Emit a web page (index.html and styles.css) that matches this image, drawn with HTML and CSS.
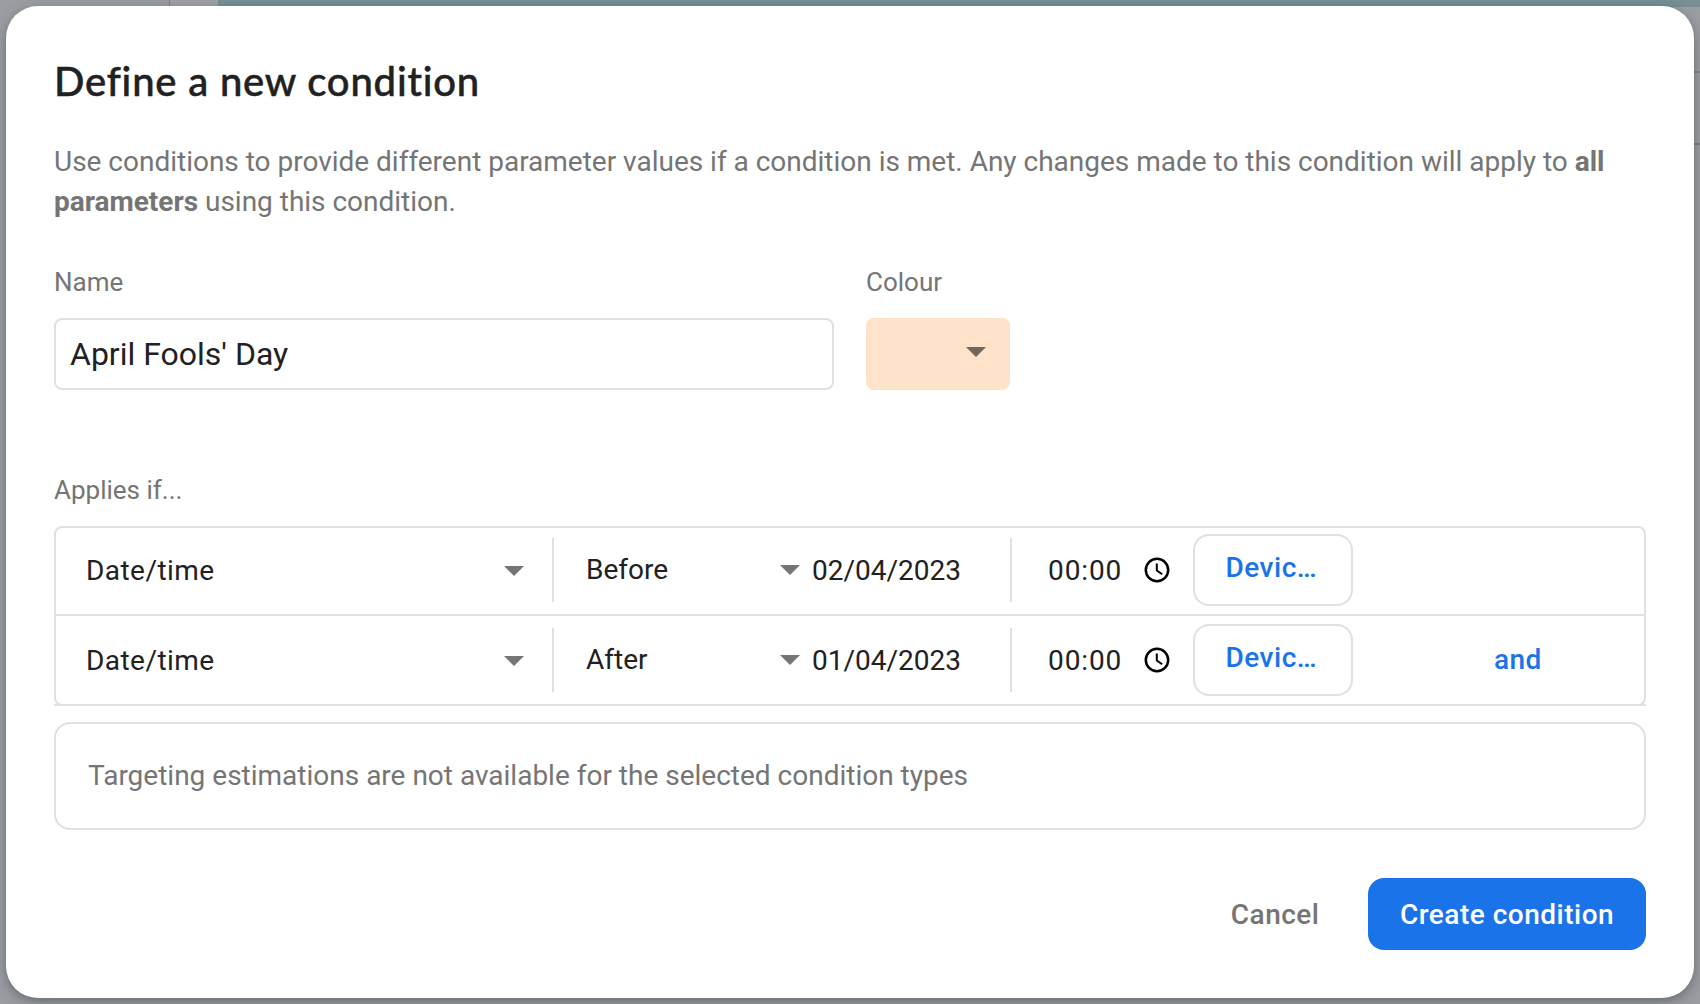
FILE: index.html
```html
<!DOCTYPE html>
<html lang="en-GB">
<head>
<meta charset="utf-8">
<title>Define a new condition</title>
<link rel="stylesheet" href="styles.css">
</head>
<body>
<div class="backdrop">
  <div class="backdrop-nav"></div>
  <div class="backdrop-gutter"></div>
  <div class="backdrop-banner"></div>
  <div class="backdrop-lines"></div>
</div>
<main class="dialog">
  <h1 class="title">Define a new condition</h1>
  <p class="intro">Use conditions to provide different parameter values if a condition is met. Any changes made to this condition will apply to <b>all parameters</b> using this condition.</p>
  <div class="fields">
    <div class="field">
      <div class="label">Name</div>
      <div class="name-input">April Fools' Day</div>
    </div>
    <div class="field">
      <div class="label">Colour</div>
      <div class="colour-select"><svg class="arrow" viewBox="0 0 20 10"><path d="M0 0h20L10 10z"/></svg></div>
    </div>
  </div>
  <div class="label applies">Applies if...</div>
  <div class="rules">
    <div class="rule">
      <div class="cell subject"><span>Date/time</span><svg class="arrow" viewBox="0 0 20 10"><path d="M0 0h20L10 10z"/></svg></div>
      <div class="cell operator"><span>Before</span><svg class="arrow" viewBox="0 0 20 10"><path d="M0 0h20L10 10z"/></svg></div>
      <div class="cell date">02/04/2023</div>
      <div class="cell time"><span>00:00</span><svg class="clock" viewBox="0 0 26 26"><circle cx="13" cy="13" r="11.2"/><path d="M12.8 6.5v7l5.4 3.8"/></svg></div>
      <div class="zone">Devic…</div>
    </div>
    <div class="rule">
      <div class="cell subject"><span>Date/time</span><svg class="arrow" viewBox="0 0 20 10"><path d="M0 0h20L10 10z"/></svg></div>
      <div class="cell operator"><span>After</span><svg class="arrow" viewBox="0 0 20 10"><path d="M0 0h20L10 10z"/></svg></div>
      <div class="cell date">01/04/2023</div>
      <div class="cell time"><span>00:00</span><svg class="clock" viewBox="0 0 26 26"><circle cx="13" cy="13" r="11.2"/><path d="M12.8 6.5v7l5.4 3.8"/></svg></div>
      <div class="zone">Devic…</div>
      <div class="and">and</div>
    </div>
  </div>
  <div class="note">Targeting estimations are not available for the selected condition types</div>
  <div class="actions">
    <div class="cancel">Cancel</div>
    <div class="create">Create condition</div>
  </div>
</main>
</body>
</html>
```

FILE: styles.css
```css
* { box-sizing: border-box; }
body {
  margin: 0;
  width: 1700px;
  height: 1004px;
  padding: 6px;
  overflow: hidden;
  background: #9a9ea3;
  font-family: Roboto, sans-serif;
  font-size: 28px;
  line-height: 40px;
  color: #212121;
}
.backdrop {
  position: absolute;
  inset: 0;
  display: grid;
  grid-template-columns: 170px 48px 1fr;
}
.backdrop-nav { height: 40px; border-right: 1px solid #7c7f83; }
.backdrop-gutter { height: 40px; background: #a0a1a7; }
.backdrop-banner { height: 7px; background: #769093; }
.backdrop-lines {
  position: absolute;
  right: 0;
  top: 71px;
  width: 12px;
  height: 74px;
  border-top: 2px solid #85898d;
  border-bottom: 2px solid #7c8084;
}
.dialog {
  position: relative;
  height: 992px;
  padding: 50px 48px 48px;
  border-radius: 32px;
  background: #fff;
  box-shadow: 0 3px 8px rgba(0, 0, 0, .22), 0 6px 20px rgba(0, 0, 0, .12);
}
.title {
  margin: 0;
  font: 500 40px/50px Lato, sans-serif;
  letter-spacing: .8px;
  -webkit-text-stroke: .5px #212121;
}
.intro { margin: 36px 0 0; color: #757575; letter-spacing: -.01px; }
.intro b { font-weight: 700; }
.fields { display: flex; gap: 32px; margin-top: 44px; }
.label { font-size: 26px; line-height: 32px; color: #757575; }
.name-input {
  width: 780px;
  height: 72px;
  margin-top: 20px;
  padding-left: 14px;
  border: 2px solid #e0e0e0;
  border-radius: 8px;
  font-size: 32px;
  line-height: 68px;
}
.colour-select {
  width: 144px;
  height: 72px;
  margin-top: 20px;
  padding: 29px 24px 0 0;
  border-radius: 8px;
  background: #fee2ca;
  display: flex;
  justify-content: flex-end;
}
.colour-select .arrow { fill: #72665b; }
.arrow { width: 20px; height: 10px; fill: #757575; flex: none; }
.applies { margin-top: 84px; }
.rules {
  position: relative;
  height: 180px;
  margin-top: 20px;
  border: 2px solid #e0e0e0;
  border-radius: 8px;
}
.rules::after {
  content: "";
  position: absolute;
  left: -2px;
  right: -2px;
  bottom: -2px;
  height: 2px;
  background: #e0e0e0;
}
.rule { display: flex; height: 88px; padding-top: 10px; }
.rule:first-child { border-bottom: 2px solid #e0e0e0; }
.rule + .rule { padding-top: 12px; }
.cell { display: flex; height: 64px; align-items: center; }
.subject { width: 498px; padding: 2px 28px 0 30px; justify-content: space-between; border-right: 2px solid #e0e0e0; letter-spacing: .45px; }
.operator { width: 246px; padding-left: 32px; justify-content: space-between; }
.date { width: 212px; padding: 2px 0 0 12px; border-right: 2px solid #e0e0e0; }
.time { width: 181px; padding: 2px 23px 0 36px; justify-content: space-between; letter-spacing: .9px; }
.clock { width: 26px; height: 26px; margin-top: -3px; fill: none; stroke: #000; stroke-width: 2.5; }
.clock path { stroke-width: 2; }
.zone {
  width: 160px;
  height: 72px;
  margin-top: -4px;
  padding-left: 30.5px;
  border: 2px solid #e0e0e0;
  border-radius: 16px;
  color: #1a73e8;
  font-weight: 500;
  line-height: 64px;
  letter-spacing: .5px;
}
.and { margin-left: 141px; color: #1a73e8; font-weight: 500; line-height: 64px; letter-spacing: .4px; }
.note {
  height: 108px;
  margin-top: 16px;
  padding-left: 32px;
  border: 2px solid #e0e0e0;
  border-radius: 16px;
  color: #757575;
  line-height: 104px;
}
.actions {
  display: flex;
  justify-content: flex-end;
  height: 72px;
  margin-top: 48px;
  font-weight: 500;
  line-height: 74px;
  letter-spacing: .5px;
}
.cancel { margin-right: 48.5px; color: #757575; }
.create { width: 278px; border-radius: 16px; background: #1a73e8; color: #fff; text-align: center; }
```
